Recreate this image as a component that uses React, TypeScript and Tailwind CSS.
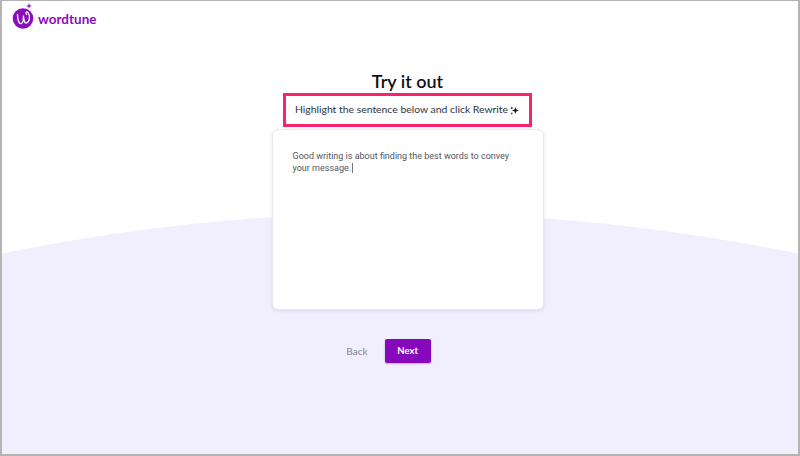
export default function App() {
  return (
    <main className="relative h-[456px] w-[800px] overflow-hidden border-x-2 border-t border-b-2 border-[#b4b4b4] bg-white font-['Lato',sans-serif]">
      {/* background curve */}
      <svg className="absolute left-[-2px] top-[-1px]" width="800" height="456" viewBox="0 0 800 456">
        <path d="M0 254 Q400 172 800 254 V456 H0 Z" fill="#f1effe" />
      </svg>

      <div className="relative flex h-full flex-col">
        <header className="flex h-[32px] items-start gap-[1px] pl-[9px]">
          <svg width="26" height="30" viewBox="0 0 26 30">
            <circle cx="12" cy="17.5" r="10.3" fill="#8a0dbd" />
            <path d="M6.5 13.5 C6.5 20 8.5 23.5 10.5 22.5 C12.5 21.5 12.5 16.5 12.5 14.5 C12.5 18.5 13.5 22.5 15.5 22 C18.5 21 19.5 15.5 17 11.5 C15.5 10 14.5 11.5 15.5 13.5" fill="none" stroke="#fff" strokeWidth="1.3" strokeLinecap="round" />
            <path d="M18 2 L18.7 4.3 L21 5 L18.7 5.7 L18 8 L17.3 5.7 L15 5 L17.3 4.3 Z" fill="#8a0dbd" />
          </svg>
          <span className="mt-[12px] text-[13.5px] font-bold leading-none text-[#8a0dbd]">wordtune</span>
        </header>

        <section className="flex flex-col items-center pl-[15px]">
          <h1 className="mt-[35px] text-[18px] font-semibold leading-[26px] text-[#0f0f14]">Try it out</h1>
          <div className="mt-[-1px] flex h-[34px] w-[249px] items-center gap-[2px] border-[3px] border-[#f8226f] pl-[9px] text-[10.4px] text-[#2c3340]">
            Highlight the sentence below and click Rewrite
            <svg width="9" height="9" viewBox="0 0 10 10">
              <path d="M6 1 L7 4 L10 5 L7 6 L6 9 L5 6 L2 5 L5 4 Z" fill="#1a1a1a" />
              <path d="M2 0.5 L2.5 1.8 L3.8 2.3 L2.5 2.8 L2 4 L1.5 2.8 L0.2 2.3 L1.5 1.8 Z M2 7 L2.4 8 L3.4 8.4 L2.4 8.8 L2 9.8 L1.6 8.8 L0.6 8.4 L1.6 8 Z" fill="#1a1a1a" />
            </svg>
          </div>
          <div className="mt-[2px] h-[181px] w-[272px] rounded-[6px] border border-[#e9e8f0] bg-white px-[20px] pt-[21px] font-['Roboto',sans-serif] text-[9px] leading-[11.5px] text-[#55555c] shadow-[0_1px_3px_rgba(60,50,110,0.12)]">
            Good writing is about finding the best words to convey your message.
            <span className="ml-[0.5px] inline-block h-[10px] w-px align-top bg-[#777]" />
          </div>
          <div className="mr-[38px] mt-[29px] flex items-center gap-[17px]">
            <button className="text-[10px] font-medium text-[#8d8d98]">Back</button>
            <button className="h-[24px] w-[46px] rounded-[2px] bg-[#8608bb] text-[9.5px] font-bold text-white shadow-[0_1px_2px_rgba(60,20,110,0.3)]">Next</button>
          </div>
        </section>
      </div>
    </main>
  );
}
